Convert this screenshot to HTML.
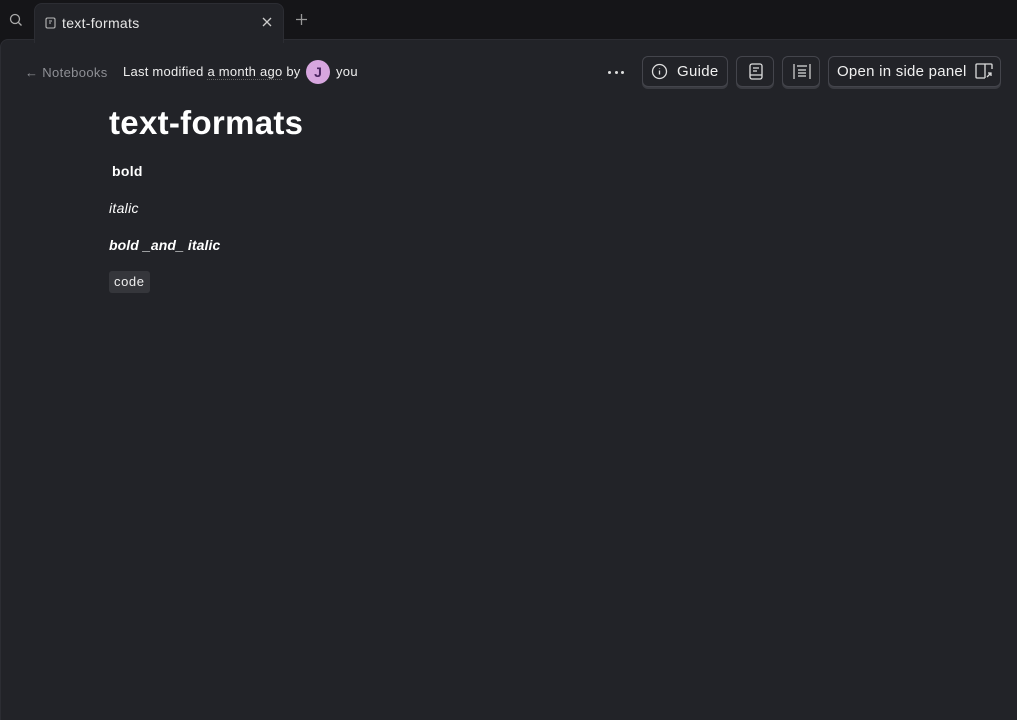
<!DOCTYPE html>
<html><head><style>
*{margin:0;padding:0;box-sizing:border-box}
body{width:1017px;height:720px;background:#151518;font-family:"Liberation Sans",sans-serif;overflow:hidden;position:relative;color:#fff}
.main{position:absolute;left:0;top:39px;width:1017px;height:681px;background:#222328;border-radius:8px 0 0 0;border-top:1px solid #2c2d33;border-left:1px solid #2c2d33}
.tab{position:absolute;left:34px;top:3px;width:250px;height:40px;background:#222328;border-radius:8px 8px 0 0;border:1px solid #2c2d33;border-bottom:none;z-index:2}
.tab span{position:absolute;left:27px;top:11px;font-size:14px;color:#e6e6e6;letter-spacing:0.3px}
.btn{position:absolute;top:56px;height:31px;border:1px solid #44454c;border-radius:6px;box-shadow:0 2px 0 #3a3b41;font-size:15px;color:#f0f0f0;background:#222328}
.t{position:absolute;white-space:nowrap}
</style></head><body>
<svg class="t" style="left:9px;top:13px" width="14" height="14" viewBox="0 0 14 14" fill="none" stroke="#aaa" stroke-width="1.3"><circle cx="6" cy="6" r="4.5"/><path d="M9.5 9.5L12.5 12.5"/></svg>
<div class="tab">
<svg style="position:absolute;left:10px;top:13px" width="11" height="12" viewBox="0 0 11 12" fill="none" stroke="#bbb" stroke-width="1.1"><rect x="1" y="1" width="9" height="10" rx="1.5"/><path d="M4 4h3M4 6h2"/></svg>
<span>text-formats</span>
<svg style="position:absolute;left:227px;top:13px" width="10" height="10" viewBox="0 0 10 10" stroke="#ccc" stroke-width="1.3"><path d="M1 1L9 9M9 1L1 9"/></svg>
</div>
<svg class="t" style="left:296px;top:14px" width="11" height="11" viewBox="0 0 11 11" stroke="#999" stroke-width="1.3"><path d="M5.5 0v11M0 5.5h11"/></svg>
<div class="main"></div>
<div class="t" style="left:25px;top:65px;font-size:13px;color:#8e8f95;letter-spacing:0.35px">← Notebooks</div>
<div class="t" style="left:123px;top:64px;font-size:13px;color:#eee;letter-spacing:0.25px">Last modified <span style="border-bottom:1px dotted #666">a month ago</span> by</div>
<div class="t" style="left:306px;top:60px;width:24px;height:24px;border-radius:50%;background:#d7a6df;color:#4a2560;font-size:14px;font-weight:bold;text-align:center;line-height:24px">J</div>
<div class="t" style="left:336px;top:64px;font-size:13px;color:#eee;letter-spacing:0.3px">you</div>
<div class="t" style="left:608px;top:71px;width:20px;height:3px">
<span style="position:absolute;left:0;width:3px;height:3px;border-radius:50%;background:#ddd"></span><span style="position:absolute;left:6.5px;width:3px;height:3px;border-radius:50%;background:#ddd"></span><span style="position:absolute;left:13px;width:3px;height:3px;border-radius:50%;background:#ddd"></span></div>
<div class="btn" style="left:642px;width:86px"><svg style="position:absolute;left:8px;top:6px" width="17" height="17" viewBox="0 0 17 17" fill="none" stroke="#ddd" stroke-width="1.3"><circle cx="8.5" cy="8.5" r="7"/><path d="M8.5 7.5v4M8.5 5v.5"/></svg><span style="position:absolute;left:34px;top:6px;letter-spacing:0.3px">Guide</span></div>
<div class="btn" style="left:736px;width:38px"><svg style="position:absolute;left:12px;top:6px" width="14" height="17" viewBox="0 0 14 17" fill="none" stroke="#ddd" stroke-width="1.3"><rect x="1" y="1" width="12" height="15" rx="2"/><path d="M4 5h6M4 8h4M1 12h12"/></svg></div>
<div class="btn" style="left:782px;width:38px"><svg style="position:absolute;left:10px;top:6px" width="18" height="17" viewBox="0 0 18 17" fill="none" stroke="#ddd" stroke-width="1.2"><path d="M1 1v15M17 1v15M4 3h10M5 7h8M5 10h8M5 13h8"/></svg></div>
<div class="btn" style="left:828px;width:173px"><span style="position:absolute;left:8px;top:6px;letter-spacing:0.25px">Open in side panel</span><svg style="position:absolute;left:146px;top:6px" width="18" height="16" viewBox="0 0 18 16" fill="none" stroke="#ddd" stroke-width="1.3"><path d="M17 6V2a1 1 0 0 0-1-1H2a1 1 0 0 0-1 1v12a1 1 0 0 0 1 1h8M10 1v14M12 14l4-4M13 10h3v3"/></svg></div>
<div class="t" style="left:109px;top:104px;font-size:33px;font-weight:bold;letter-spacing:0.3px">text-formats</div>
<div class="t" style="left:112px;top:163px;font-size:14px;font-weight:bold;letter-spacing:0.3px">bold</div>
<div class="t" style="left:109px;top:200px;font-size:14px;font-style:italic;letter-spacing:0.3px">italic</div>
<div class="t" style="left:109px;top:237px;font-size:14px;font-weight:bold;font-style:italic;letter-spacing:0.1px">bold _and_ italic</div>
<div class="t" style="left:109px;top:271px;height:22px;padding:0 5px;background:#35363b;border-radius:3px;font-size:13px;line-height:22px;color:#eee;letter-spacing:0.6px">code</div>
</body></html>
